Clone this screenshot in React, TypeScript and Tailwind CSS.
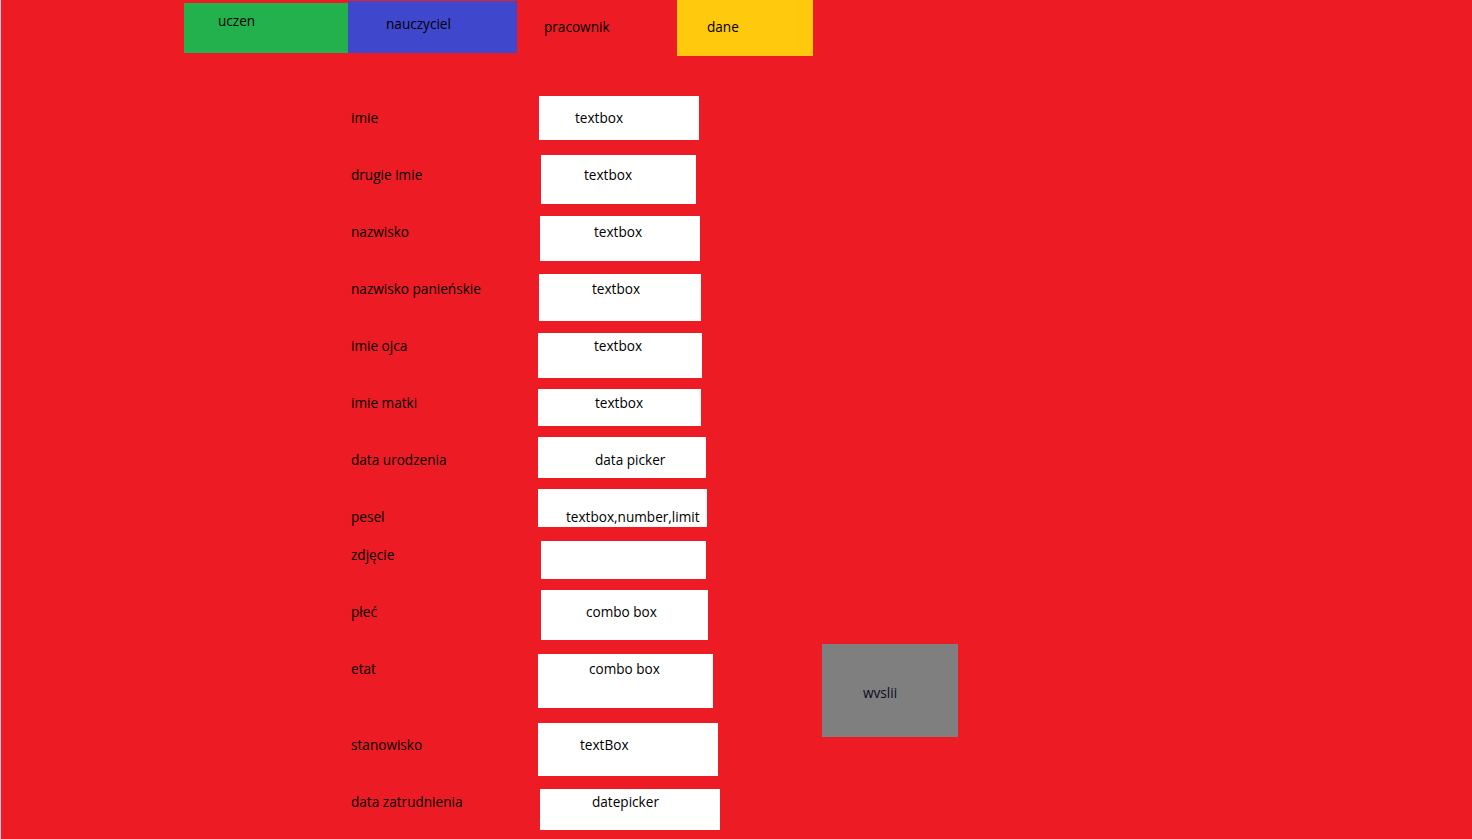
import React from "react";

type Row = {
  label: string;
  text: string;
  row: string; // gap above the row
  lab: string; // label offset inside the row
  box: string; // box offset + size
  txt: string; // text padding inside the box
};

const rows: Row[] = [
  { label: "imie", text: "textbox", row: "mt-[40px]", lab: "mt-[12px]", box: "ml-[1px] w-[160px] h-[44px]", txt: "pl-[36px] pt-[12px]" },
  { label: "drugie imie", text: "textbox", row: "mt-[15px]", lab: "mt-[10px]", box: "ml-[3px] w-[155px] h-[49px]", txt: "pl-[43px] pt-[10px]" },
  { label: "nazwisko", text: "textbox", row: "mt-[12px]", lab: "mt-[6px]", box: "ml-[2px] w-[160px] h-[45px]", txt: "pl-[54px] pt-[6px]" },
  { label: "nazwisko panieńskie", text: "textbox", row: "mt-[13px]", lab: "mt-[5px]", box: "ml-[1px] w-[162px] h-[47px]", txt: "pl-[53px] pt-[5px]" },
  { label: "imie ojca", text: "textbox", row: "mt-[12px]", lab: "mt-[3px]", box: "ml-0 w-[164px] h-[45px]", txt: "pl-[56px] pt-[3px]" },
  { label: "imie matki", text: "textbox", row: "mt-[11px]", lab: "mt-[4px]", box: "ml-0 w-[163px] h-[37px]", txt: "pl-[57px] pt-[4px]" },
  { label: "data urodzenia", text: "data picker", row: "mt-[11px]", lab: "mt-[13px]", box: "ml-0 w-[168px] h-[41px]", txt: "pl-[57px] pt-[13px]" },
  { label: "pesel", text: "textbox,number,limit", row: "mt-[11px]", lab: "mt-[18px]", box: "ml-0 w-[169px] h-[38px]", txt: "pl-[28px] pt-[18px]" },
  { label: "zdjęcie", text: "", row: "mt-[14px]", lab: "mt-[4px]", box: "ml-[3px] w-[165px] h-[38px]", txt: "pl-0 pt-0" },
  { label: "płeć", text: "combo box", row: "mt-[11px]", lab: "mt-[12px]", box: "ml-[3px] w-[167px] h-[50px]", txt: "pl-[45px] pt-[12px]" },
  { label: "etat", text: "combo box", row: "mt-[14px]", lab: "mt-[5px]", box: "ml-0 w-[175px] h-[54px]", txt: "pl-[51px] pt-[5px]" },
  { label: "stanowisko", text: "textBox", row: "mt-[15px]", lab: "mt-[12px]", box: "ml-0 w-[180px] h-[53px]", txt: "pl-[42px] pt-[12px]" },
  { label: "data zatrudnienia", text: "datepicker", row: "mt-[13px]", lab: "mt-[3px]", box: "ml-[2px] w-[180px] h-[41px]", txt: "pl-[52px] pt-[3px]" },
];

const App = () => {
  return (
    <div
      className="w-[1472px] h-[839px] overflow-hidden bg-[#ed1c24] border-l border-[#b9cde0] text-[13.6px] leading-[20px] text-black"
      style={{ fontFamily: '"Open Sans", "Noto Sans", sans-serif' }}
    >
      {/* top tabs */}
      <div className="flex items-start h-[56px]">
        <div className="w-[183px]" />
        <div className="mt-[3px] h-[50px] w-[164px] bg-[#22b14c] pl-[34px] pt-[8px]">uczen</div>
        <div className="mt-[1px] h-[52px] w-[169px] bg-[#3f48cc] pl-[38px] pt-[13px]">nauczyciel</div>
        <div className="h-[56px] w-[160px] pl-[27px] pt-[17px]">pracownik</div>
        <div className="h-[56px] w-[136px] bg-[#ffc90e] pl-[30px] pt-[17px]">dane</div>
      </div>

      <div className="flex items-start">
        {/* form */}
        <div className="flex flex-col pl-[350px] w-[719px]">
          {rows.map((r, i) => (
            <div key={i} className={`flex items-start ${r.row}`}>
              <div className={`w-[187px] whitespace-nowrap ${r.lab}`}>{r.label}</div>
              <div className={`bg-white whitespace-nowrap ${r.box} ${r.txt}`}>{r.text}</div>
            </div>
          ))}
        </div>

        {/* send button */}
        <div className="ml-[102px] mt-[588px] h-[93px] w-[136px] bg-[#7f7f7f] pl-[41px] pt-[39px] text-[#0a0a20]">
          wvslii
        </div>
      </div>
    </div>
  );
};

export default App;
